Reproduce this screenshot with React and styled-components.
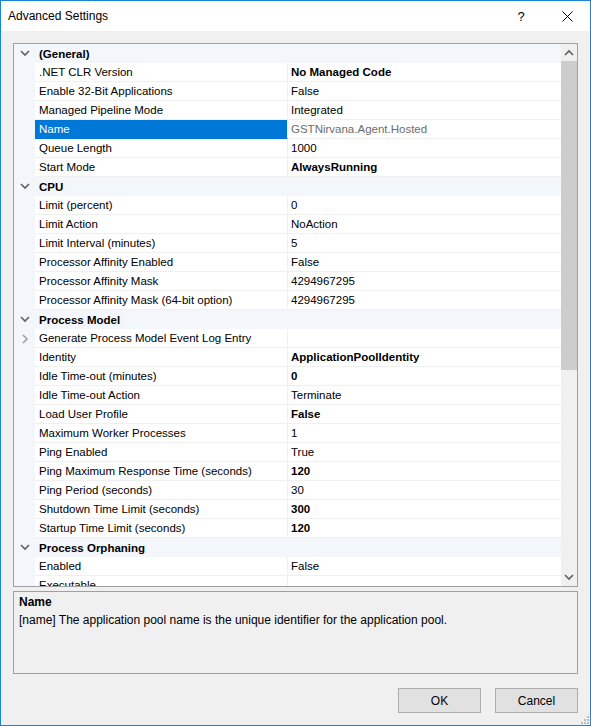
import React from "react";
import styled, { createGlobalStyle } from "styled-components";

const GlobalStyle = createGlobalStyle`
  html, body {
    margin: 0;
    padding: 0;
    background: #f0f0f0;
  }
  * {
    box-sizing: border-box;
  }
`;

const FONT = `"Segoe UI", "Liberation Sans", Arial, sans-serif`;

const Window = styled.div`
  width: 591px;
  height: 726px;
  border: 1px solid #1883d7;
  display: flex;
  flex-direction: column;
  font-family: ${FONT};
  font-size: 11.5px;
  color: #000;
  overflow: hidden;
`;

const TitleBar = styled.div`
  height: 30px;
  background: #fff;
  display: flex;
  align-items: center;
  padding-left: 7px;
  flex-shrink: 0;
`;

const Title = styled.div`
  flex: 1;
  font-size: 12px;
`;

const TitleButton = styled.div`
  width: 46px;
  height: 30px;
  display: flex;
  align-items: center;
  justify-content: center;
  font-size: 13px;
`;

const Body = styled.div`
  flex: 1;
  background: #f0f0f0;
  padding: 12px 12px 0 12px;
  display: flex;
  flex-direction: column;
  position: relative;
`;

const Grid = styled.div`
  height: 544px;
  border: 1px solid #a0a0a0;
  display: flex;
  background: #fff;
`;

const List = styled.div`
  flex: 1;
  overflow: hidden;
  background: #f3f6fb;
`;

const Row = styled.div`
  height: 19px;
  display: flex;
  align-items: stretch;
`;

const Gutter = styled.div`
  width: 21px;
  flex-shrink: 0;
  display: flex;
  align-items: center;
  justify-content: center;
`;

const CategoryLabel = styled.div`
  font-weight: bold;
  display: flex;
  align-items: center;
  padding-left: 4px;
`;

const NameCell = styled.div`
  width: 253px;
  flex-shrink: 0;
  display: flex;
  align-items: center;
  padding-left: 4px;
  background: ${(p) => (p.$selected ? "#0078d7" : "#fff")};
  color: ${(p) => (p.$selected ? "#fff" : "#000")};
  border-right: 1px solid #f0f0f0;
  border-bottom: 1px solid ${(p) => (p.$selected ? "#0078d7" : "#f0f0f0")};
  white-space: nowrap;
`;

const ValueCell = styled.div`
  flex: 1;
  display: flex;
  align-items: center;
  padding-left: 3px;
  background: #fff;
  border-bottom: 1px solid #f0f0f0;
  font-weight: ${(p) => (p.$bold ? "bold" : "normal")};
  color: ${(p) => (p.$muted ? "#6d6d6d" : "#000")};
  white-space: nowrap;
`;

const ScrollBar = styled.div`
  width: 16px;
  flex-shrink: 0;
  background: #f0f0f0;
  display: flex;
  flex-direction: column;
`;

const ScrollArrow = styled.div`
  height: 17px;
  display: flex;
  align-items: center;
  justify-content: center;
  flex-shrink: 0;
`;

const Thumb = styled.div`
  height: 309px;
  background: #cdcdcd;
  flex-shrink: 0;
`;

const Track = styled.div`
  flex: 1;
`;

const Description = styled.div`
  margin-top: 4px;
  height: 83px;
  border: 1px solid #a0a0a0;
  padding: 1px 5px;
  line-height: 18px;
  font-size: 12px;
`;

const DescTitle = styled.div`
  font-weight: bold;
`;

const Buttons = styled.div`
  display: flex;
  justify-content: flex-end;
  gap: 14px;
  margin-top: 14px;
`;

const Button = styled.div`
  width: 83px;
  height: 25px;
  background: #e1e1e1;
  border: 1px solid #adadad;
  display: flex;
  align-items: center;
  justify-content: center;
  font-size: 12px;
`;

const Grip = styled.svg`
  position: absolute;
  right: 1px;
  bottom: 1px;
`;

const Chevron = ({ dir = "down", color = "#606060" }) => {
  const pts = {
    down: "1,2 5,6 9,2",
    right: "3,1 7,5 3,9",
    up: "1,7 5,3 9,7",
  }[dir];
  return (
    <svg width="10" height="10" viewBox="0 0 10 10">
      <polyline points={pts} fill="none" stroke={color} strokeWidth="1.6" />
    </svg>
  );
};

const data = [
  {
    category: "(General)",
    rows: [
      [".NET CLR Version", "No Managed Code", { bold: true }],
      ["Enable 32-Bit Applications", "False"],
      ["Managed Pipeline Mode", "Integrated"],
      ["Name", "GSTNirvana.Agent.Hosted", { selected: true, muted: true }],
      ["Queue Length", "1000"],
      ["Start Mode", "AlwaysRunning", { bold: true }],
    ],
  },
  {
    category: "CPU",
    rows: [
      ["Limit (percent)", "0"],
      ["Limit Action", "NoAction"],
      ["Limit Interval (minutes)", "5"],
      ["Processor Affinity Enabled", "False"],
      ["Processor Affinity Mask", "4294967295"],
      ["Processor Affinity Mask (64-bit option)", "4294967295"],
    ],
  },
  {
    category: "Process Model",
    rows: [
      ["Generate Process Model Event Log Entry", "", { expand: true }],
      ["Identity", "ApplicationPoolIdentity", { bold: true }],
      ["Idle Time-out (minutes)", "0", { bold: true }],
      ["Idle Time-out Action", "Terminate"],
      ["Load User Profile", "False", { bold: true }],
      ["Maximum Worker Processes", "1"],
      ["Ping Enabled", "True"],
      ["Ping Maximum Response Time (seconds)", "120", { bold: true }],
      ["Ping Period (seconds)", "30"],
      ["Shutdown Time Limit (seconds)", "300", { bold: true }],
      ["Startup Time Limit (seconds)", "120", { bold: true }],
    ],
  },
  {
    category: "Process Orphaning",
    rows: [
      ["Enabled", "False"],
      ["Executable", ""],
    ],
  },
];

export default function App() {
  return (
    <>
      <GlobalStyle />
      <Window>
        <TitleBar>
          <Title>Advanced Settings</Title>
          <TitleButton>?</TitleButton>
          <TitleButton>
            <svg width="11" height="11" viewBox="0 0 11 11">
              <path d="M0.5 0.5L10.5 10.5M10.5 0.5L0.5 10.5" stroke="#000" strokeWidth="1" />
            </svg>
          </TitleButton>
        </TitleBar>
        <Body>
          <Grid>
            <List>
              {data.map((group) => (
                <React.Fragment key={group.category}>
                  <Row>
                    <Gutter>
                      <Chevron dir="down" />
                    </Gutter>
                    <CategoryLabel>{group.category}</CategoryLabel>
                  </Row>
                  {group.rows.map(([name, value, opts = {}]) => (
                    <Row key={name}>
                      <Gutter>{opts.expand && <Chevron dir="right" color="#a0a0a0" />}</Gutter>
                      <NameCell $selected={opts.selected}>{name}</NameCell>
                      <ValueCell $bold={opts.bold} $muted={opts.muted}>
                        {value}
                      </ValueCell>
                    </Row>
                  ))}
                </React.Fragment>
              ))}
            </List>
            <ScrollBar>
              <ScrollArrow>
                <Chevron dir="up" />
              </ScrollArrow>
              <Thumb />
              <Track />
              <ScrollArrow>
                <Chevron dir="down" />
              </ScrollArrow>
            </ScrollBar>
          </Grid>
          <Description>
            <DescTitle>Name</DescTitle>
            <div>[name] The application pool name is the unique identifier for the application pool.</div>
          </Description>
          <Buttons>
            <Button>OK</Button>
            <Button>Cancel</Button>
          </Buttons>
          <Grip width="8" height="8" viewBox="0 0 8 8">
            {[
              [6, 0],
              [6, 3],
              [3, 3],
              [6, 6],
              [3, 6],
              [0, 6],
            ].map(([x, y]) => (
              <rect key={`${x}-${y}`} x={x} y={y} width="2" height="2" fill="#bcbcbc" />
            ))}
          </Grip>
        </Body>
      </Window>
    </>
  );
}
